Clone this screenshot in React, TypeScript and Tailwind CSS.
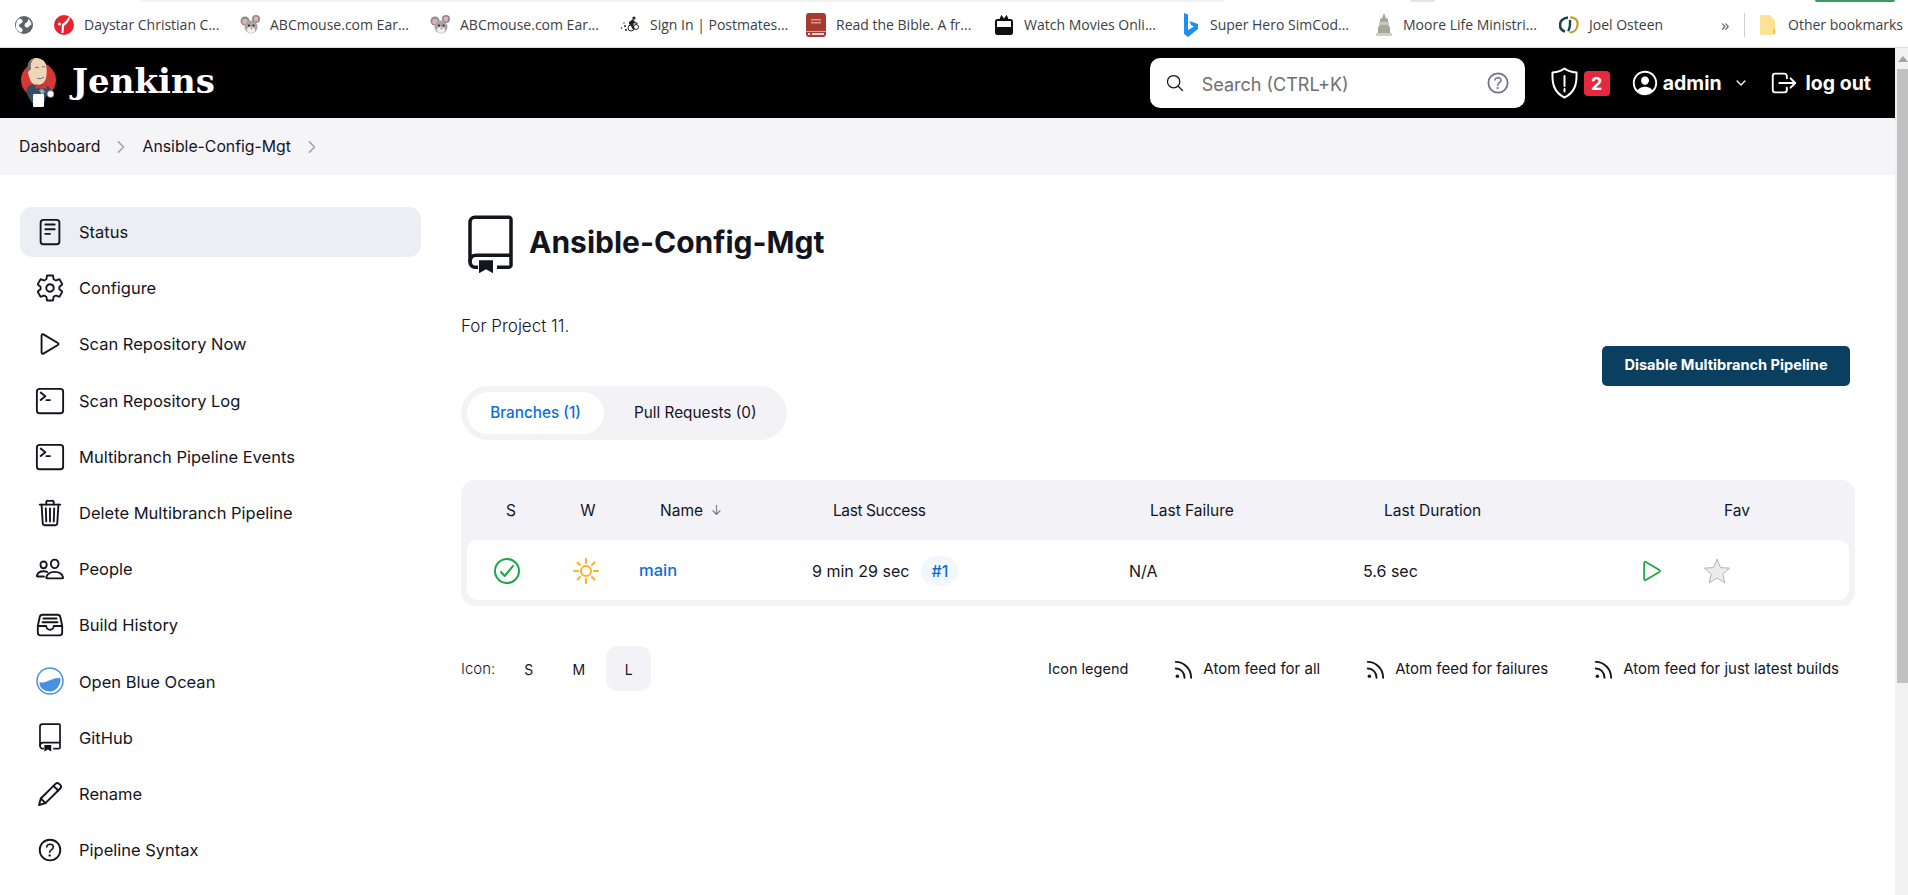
import type { ReactNode } from 'react';
import {
  IoReaderOutline,
  IoSettingsOutline,
  IoPlayOutline,
  IoTerminalOutline,
  IoTrashOutline,
  IoPeopleOutline,
  IoFileTrayFullOutline,
  IoHelpCircleOutline,
  IoSearchOutline,
  IoPersonCircleOutline,
  IoChevronDownOutline,
  IoLogOutOutline,
  IoChevronForwardOutline,
  IoCheckmarkCircleOutline,
} from 'react-icons/io5';

function GlobeIcon() {
  return (
    <svg width="18" height="18" viewBox="0 0 18 18">
      <circle cx="9" cy="9" r="9" fill="#5f6368" />
      <path d="M5 2.500c2 1 3 2 2.500 3.500S4 7.500 4 9.500s3 2 3.500 4-1 2.500-1.500 3c-4-1.500-5.500-4-5-8S3 3 5 2.500z" fill="#fff" />
      <path d="M10 7.500c2-.5 3.500-2.500 3-4.500 2 1 3.500 3.500 3.500 5.500-1.500.5-2 1.500-3 2.500s-2.500.5-3.500-.5 0-2.500 0-3z" fill="#fff" />
    </svg>
  );
}

function DaystarIcon() {
  return (
    <svg width="20" height="20" viewBox="0 0 20 20">
      <circle cx="10" cy="10" r="10" fill="#e8222e" />
      <path d="M8 9c2-1 5-4 7-7l1 1c-1 3-3 6-6 8l-.5 7H7.500z" fill="#fff" />
      <circle cx="5.500" cy="9" r="1.600" fill="#fff" />
      <path d="M11 4.500l2-1.500-1 3z" fill="#e8222e" />
    </svg>
  );
}

function MouseIcon() {
  return (
    <svg width="21" height="21" viewBox="0 0 21 21">
      <circle cx="5" cy="7" r="4.500" fill="#8f8b8d" />
      <circle cx="5" cy="7.500" r="2.800" fill="#e3b0b8" />
      <circle cx="16" cy="5" r="4" fill="#8f8b8d" />
      <circle cx="16" cy="5" r="2.400" fill="#e3b0b8" />
      <ellipse cx="11" cy="13" rx="6.500" ry="6.500" fill="#a9a5a6" />
      <ellipse cx="11" cy="16" rx="4" ry="3" fill="#f3efec" />
      <circle cx="9" cy="11.500" r="1" fill="#222" />
      <circle cx="13.500" cy="11.500" r="1" fill="#222" />
      <circle cx="11.500" cy="14.500" r="1" fill="#d9707c" />
    </svg>
  );
}

function PostmatesIcon() {
  return (
    <svg width="20" height="20" viewBox="0 0 20 20" fill="#222">
      <circle cx="14" cy="3" r="1.600" />
      <path d="M9 7l4-3 2 3 3 1-1 1-3-1-1 3 1 3h-1.500L11 11 9 9z" />
      <circle cx="11" cy="13" r="3" fill="none" stroke="#222" />
      <circle cx="16" cy="12" r="2.500" fill="none" stroke="#222" />
      <circle cx="1.500" cy="13" r="0.800" />
      <circle cx="5" cy="11" r="1" />
      <circle cx="6" cy="15" r="1" />
      <circle cx="4" cy="8" r="0.700" />
    </svg>
  );
}

function BibleIcon() {
  return (
    <svg width="20" height="24" viewBox="0 0 20 24">
      <rect x="0" y="0" width="20" height="24" rx="3" fill="#a83a32" />
      <rect x="5" y="6" width="10" height="1.500" fill="#d9958f" />
      <rect x="5" y="9" width="10" height="1.500" fill="#d9958f" />
      <rect x="0" y="18" width="20" height="1" fill="#d9a7a3" />
      <rect x="2" y="20" width="16" height="2" fill="#f4e3e1" />
      <rect x="4" y="20" width="2" height="2" fill="#d8333a" />
    </svg>
  );
}

function MovieIcon() {
  return (
    <svg width="18" height="20" viewBox="0 0 18 20">
      <rect x="1" y="5" width="16" height="14" rx="1.500" fill="#fff" stroke="#111" strokeWidth="2" />
      <rect x="1" y="12" width="16" height="7" fill="#111" />
      <path d="M5 5l1.500-3.500L9 5l2.500-3.500L13 5" fill="none" stroke="#111" strokeWidth="1.600" />
    </svg>
  );
}

function BingIcon() {
  return (
    <svg width="14" height="24" viewBox="0 0 14 24">
      <path d="M0 0l4 1.500v15.500l6-3.500-3-1.500-1.500-4L14 11v5L4 24l-4-3z" fill="#1d8ff0" />
    </svg>
  );
}

function MooreIcon() {
  return (
    <svg width="16" height="24" viewBox="0 0 16 24">
      <path d="M8 0l2 5 2 1v6l2 2v6H2v-6l2-2V6l2-1z" fill="#a5ab9a" />
      <rect x="3" y="9" width="10" height="3" fill="#c9cdb4" />
      <rect x="0" y="20" width="16" height="3" fill="#d0d0ca" />
    </svg>
  );
}

function JoelIcon() {
  return (
    <svg width="20" height="20" viewBox="0 0 20 20" fill="none">
      <path d="M11 2.500C17 2 19 6 18.500 10c-.5 5-4 7.500-8 7.500" stroke="#c89a35" strokeWidth="2.200" />
      <path d="M9 2.500C4 3 1 6 1 10c0 3 2 5.500 5 6.500" stroke="#17425f" strokeWidth="2.600" />
      <path d="M11 5c0 4 .5 8-2 11" stroke="#17425f" strokeWidth="2.400" />
    </svg>
  );
}

function FolderIcon() {
  return (
    <svg width="16" height="20" viewBox="0 0 16 20">
      <path d="M1.500 0H10l5 5.500V18a2 2 0 01-2 2H1.500A1.500 1.500 0 010 18.500v-17A1.500 1.500 0 011.500 0z" fill="#fde293" />
      <rect x="13" y="14" width="2.500" height="5" rx="1" fill="#f4c94e" />
    </svg>
  );
}

function JenkinsLogo() {
  return (
    <svg width="36" height="50" viewBox="0 0 36 50">
      <circle cx="18.500" cy="22" r="17.500" fill="#d33833" />
      <path d="M7 30c2-3 6-4 9-4l9 1c3 1 6 3 6 5l-1 5-4 1-2 8-12-1-3-5c-2-3-3-7-2-10z" fill="#335061" />
      <path d="M8 9C8 3 12 0 16 0s9 2 10 7c1 4 1 9 0 13s-4 7-8 7-7-2-8-6c-2-3-2-8-2-12z" fill="#f0d6b7" />
      <path d="M8 14C6 8 9 2 14 .5 11 3 10 7 11 11c-1 1-2 2-3 3z" fill="#6d6b6d" />
      <path d="M15 10c1.500-1 3-1 4 0M22 9c1-.5 2-.5 3 0M17 20c2 1 5 1 7-1" stroke="#49728b" strokeWidth="1" fill="none" />
      <path d="M16 26l5 2 5-2 1 5-4-1-2 1.500-2-1.500-4 1z" fill="#d33833" />
      <path d="M19 32l4-1 2 3-3 3z" fill="#81b0c4" />
      <rect x="13" y="36" width="11" height="13" rx="1" fill="#fff" />
      <circle cx="30.500" cy="36" r="3.500" fill="#f6f6f6" stroke="#49728b" strokeWidth="0.800" />
    </svg>
  );
}

function ShieldAlert() {
  return (
    <svg width="27" height="32" viewBox="0 0 27 32" fill="none" stroke="#fff" strokeWidth="2">
      <path d="M13.500 1.500c3 2.500 7 3.500 12 4 .5 11-1.500 20-12 25-10.500-5-12.500-14-12-25 5-.5 9-1.500 12-4z" strokeLinejoin="round" />
      <path d="M13.500 9v10M13.500 22v2.500" strokeLinecap="round" />
    </svg>
  );
}

function RepoIcon({ size }: { size: number }) {
  return (
    <svg width={size} height={size * 1.3} viewBox="0 0 45 58" fill="none">
      <path d="M10 52H6c-2.500-1-4-3-4-5V7c0-3 2-5 5-5h34c1 0 2 1 2 2v46c0 1-1 2-2 2H29" stroke="#14141f" strokeWidth="3.500" strokeLinejoin="round" />
      <path d="M2 47c0-5 2-7 6-7h35" stroke="#14141f" strokeWidth="3.500" />
      <path d="M11 45h14v13l-7-4-7 4z" fill="#14141f" />
    </svg>
  );
}

function PencilIcon() {
  return (
    <svg width="26" height="26" viewBox="0 0 26 26" fill="none" stroke="#14141f" strokeWidth="1.900" strokeLinejoin="round" strokeLinecap="round">
      <path d="M2 24l1.800-6.500L18.500 2.800c1-1 2.600-1 3.600 0l1.100 1.100c1 1 1 2.600 0 3.600L8.500 22.200z" />
      <path d="M3.800 17.500l4.700 4.700M16.500 4.800l4.700 4.700" />
    </svg>
  );
}

function BlueOceanIcon() {
  return (
    <svg width="28" height="28" viewBox="0 0 28 28">
      <circle cx="14" cy="14" r="13" fill="#fff" stroke="#4a90e2" strokeWidth="1.500" />
      <path d="M3.500 15c4 1.500 7-.5 11-2 4-1.500 7-2.500 10-1.500.5 6-4 13-10.500 13S3 20 3.500 15z" fill="#4a90e2" />
    </svg>
  );
}

function SunIcon() {
  return (
    <svg width="28" height="28" viewBox="0 0 28 28" fill="none" stroke="#fdb022" strokeWidth="2" strokeLinecap="round">
      <circle cx="14" cy="14" r="5" />
      <path d="M14 2v4M14 22v4M2 14h4M22 14h4M5.500 5.500l2.500 2.500M20 20l2.500 2.500M5.500 22.500L8 20M20 8l2.500-2.500" />
    </svg>
  );
}

function StarIcon() {
  return (
    <svg width="26" height="26" viewBox="0 0 26 26">
      <path d="M13 1l3.500 8.500 9 .7-6.800 5.800 2.100 8.800L13 20l-7.800 4.800 2.100-8.800L.5 10.200l9-.7z" fill="#ececec" stroke="#b5b5b5" strokeWidth="1" strokeLinejoin="round" />
    </svg>
  );
}

function RssIcon() {
  return (
    <svg width="20" height="22" viewBox="0 0 18 20" fill="none" stroke="#14141f" strokeWidth="1.700" strokeLinecap="round">
      <circle cx="3" cy="16.500" r="1.600" fill="#14141f" stroke="none" />
      <path d="M1.500 9.500c4.500 0 8 3.500 8 8.500" />
      <path d="M1.500 3.500C9 3.500 15.500 10 15.500 18" />
    </svg>
  );
}

const bookmarks: { label: string; icon: ReactNode; itemW: string; iconW: string }[] = [
  { label: 'Daystar Christian C...', icon: <DaystarIcon />, itemW: 'w-[186px]', iconW: 'w-[30px]' },
  { label: 'ABCmouse.com Ear...', icon: <MouseIcon />, itemW: 'w-[190px]', iconW: 'w-[30px]' },
  { label: 'ABCmouse.com Ear...', icon: <MouseIcon />, itemW: 'w-[190px]', iconW: 'w-[30px]' },
  { label: 'Sign In | Postmates...', icon: <PostmatesIcon />, itemW: 'w-[186px]', iconW: 'w-[30px]' },
  { label: 'Read the Bible. A fr...', icon: <BibleIcon />, itemW: 'w-[189px]', iconW: 'w-[30px]' },
  { label: 'Watch Movies Onli...', icon: <MovieIcon />, itemW: 'w-[189px]', iconW: 'w-[29px]' },
  { label: 'Super Hero SimCod...', icon: <BingIcon />, itemW: 'w-[192px]', iconW: 'w-[26px]' },
  { label: 'Moore Life Ministri...', icon: <MooreIcon />, itemW: 'w-[183px]', iconW: 'w-[27px]' },
  { label: 'Joel Osteen', icon: <JoelIcon />, itemW: 'w-[162px]', iconW: 'w-[30px]' },
];

const sideItems: { label: string; icon: ReactNode; active?: boolean }[] = [
  { label: 'Status', icon: <IoReaderOutline size={30} />, active: true },
  { label: 'Configure', icon: <IoSettingsOutline size={30} /> },
  { label: 'Scan Repository Now', icon: <IoPlayOutline size={30} /> },
  { label: 'Scan Repository Log', icon: <IoTerminalOutline size={30} /> },
  { label: 'Multibranch Pipeline Events', icon: <IoTerminalOutline size={30} /> },
  { label: 'Delete Multibranch Pipeline', icon: <IoTrashOutline size={30} /> },
  { label: 'People', icon: <IoPeopleOutline size={30} /> },
  { label: 'Build History', icon: <IoFileTrayFullOutline size={30} /> },
  { label: 'Open Blue Ocean', icon: <BlueOceanIcon /> },
  { label: 'GitHub', icon: <RepoIcon size={22} /> },
  { label: 'Rename', icon: <PencilIcon /> },
  { label: 'Pipeline Syntax', icon: <IoHelpCircleOutline size={32} /> },
];

const feeds = ['Atom feed for all', 'Atom feed for failures', 'Atom feed for just latest builds'];

export default function App() {
  return (
    <div className="h-[895px] w-[1908px] overflow-hidden bg-white font-['Inter',sans-serif] text-[#14141f]">
      {/* bookmarks bar */}
      <div className="h-[48px] border-b border-[#dadce0] bg-white">
        <div className="flex h-[2px]">
          <div className="ml-[140px] w-[1085px] rounded-b bg-[#f1f3f4]" />
          <div className="ml-[185px] w-[25px] rounded-b bg-[#e3e3e3]" />
          <div className="ml-[380px] w-[80px] rounded-b bg-[#3c9a5f]" />
        </div>
        <div className="flex h-[45px] items-center pl-[15px] font-['Open_Sans',sans-serif] text-[14px] text-[#3c4043]">
          <div className="mr-[21px] flex w-[18px] items-center"><GlobeIcon /></div>
          {bookmarks.map((b, i) => (
            <div key={i} className={`flex items-center ${b.itemW}`}>
              <span className={`flex shrink-0 items-center ${b.iconW}`}>{b.icon}</span>
              <span className="whitespace-nowrap">{b.label}</span>
            </div>
          ))}
          <span className="w-[23px] text-[17px] text-[#5f6368]">»</span>
          <div className="mr-[15px] h-[24px] w-px bg-[#d0d3d6]" />
          <span className="flex w-[28px] shrink-0 items-center"><FolderIcon /></span>
          <span className="whitespace-nowrap">Other bookmarks</span>
        </div>
      </div>

      <div className="flex h-[847px]">
        <div className="w-[1895px] shrink-0">
          {/* jenkins header */}
          <header className="flex h-[70px] items-center bg-black pr-[24px] pl-[20px] text-white">
            <JenkinsLogo />
            <span className="ml-[16px] pb-[4px] font-['DejaVu_Serif',serif] text-[34px] leading-none font-bold">Jenkins</span>
            <div className="ml-auto flex h-[50px] w-[375px] items-center rounded-[10px] bg-white pr-[13px] pl-[15px]">
              <IoSearchOutline size={20} className="text-[#14141f]" />
              <span className="ml-[17px] pt-[2px] text-[18px] text-[#6e6e73]">Search (CTRL+K)</span>
              <IoHelpCircleOutline size={28} className="ml-auto text-[#6f6f90]" />
            </div>
            <span className="ml-[26px] flex"><ShieldAlert /></span>
            <span className="ml-[6px] flex h-[25px] w-[26px] items-center justify-center rounded-[4px] bg-[#e6293f] text-[18px] font-bold">2</span>
            <IoPersonCircleOutline size={30} className="ml-[20px]" />
            <span className="ml-[3px] pt-[2px] text-[19.500px] font-bold">admin</span>
            <IoChevronDownOutline size={14} className="ml-[12px]" />
            <IoLogOutOutline size={30} className="ml-[21px]" />
            <span className="ml-[7px] pt-[2px] text-[19.500px] font-bold">log out</span>
          </header>

          {/* breadcrumb */}
          <nav className="flex h-[57px] items-center bg-[#f5f5f8] pt-[1px] pl-[19px] text-[15.800px] text-[#14141f]">
            <span>Dashboard</span>
            <IoChevronForwardOutline size={18} className="mx-[12px] text-[#a3a3bd]" />
            <span>Ansible-Config-Mgt</span>
            <IoChevronForwardOutline size={18} className="ml-[12px] text-[#a3a3bd]" />
          </nav>

          <div className="flex">
            {/* sidebar */}
            <aside className="flex w-[421px] shrink-0 flex-col gap-[6.180px] pt-[32px] pl-[20px]">
              {sideItems.map(item => (
                <div
                  key={item.label}
                  className={`flex h-[50px] items-center rounded-[12px] pl-[15px] text-[16.500px] ${item.active ? 'bg-[#edeef3]' : ''}`}
                >
                  <span className="flex w-[30px] shrink-0 items-center justify-center">{item.icon}</span>
                  <span className="mt-px ml-[14px]">{item.label}</span>
                </div>
              ))}
            </aside>

            {/* main content */}
            <main className="min-w-0 flex-1 pr-[40px] pl-[40px]">
              <div className="mt-[40px] flex h-[58px] items-center pl-[7px]">
                <RepoIcon size={45} />
                <h1 className="ml-[16px] pb-[4px] text-[30px] font-bold">Ansible-Config-Mgt</h1>
              </div>
              <p className="mt-[41px] h-[24px] text-[17px] leading-[24px] font-light">For Project 11.</p>

              <div className="mt-[8px] flex justify-end pr-[5px]">
                <button className="flex h-[40px] w-[248px] items-center justify-center rounded-[5px] bg-[#0a3f5f] text-[14.600px] font-bold text-white">
                  Disable Multibranch Pipeline
                </button>
              </div>

              <div className="flex h-[54px] w-[326px] items-center rounded-[27px] bg-[#f2f2f7] p-[6px] text-[15.300px]">
                <div className="flex h-[42px] w-[137px] items-center justify-center rounded-[21px] bg-white pt-px font-medium text-[#0b6ed8]">Branches (1)</div>
                <div className="ml-[30px] pt-px">Pull Requests (0)</div>
              </div>

              {/* projects table */}
              <div className="mt-[40px] rounded-[14px] bg-[#f2f2f7] px-[6px] pb-[6px]">
                <div className="flex h-[60px] items-center pt-px text-[15.500px]">
                  <div className="w-[88px] text-center">S</div>
                  <div className="w-[66px] text-center">W</div>
                  <div className="flex w-[179px] items-center pl-[39px]">Name<span className="ml-[8px] text-[13px] font-light text-[#55555f]">↓</span></div>
                  <div className="w-[315px] pl-[33px] tracking-[-0.400px]">Last Success</div>
                  <div className="w-[235px] pl-[35px]">Last Failure</div>
                  <div className="w-[280px] pl-[34px]">Last Duration</div>
                  <div className="pl-[94px]">Fav</div>
                </div>
                <div className="flex h-[60px] items-center rounded-[10px] bg-white pt-px text-[16px]">
                  <div className="flex w-[80px] justify-center"><IoCheckmarkCircleOutline size={32} className="text-[#1ea64b]" /></div>
                  <div className="flex w-[78px] justify-center"><SunIcon /></div>
                  <div className="w-[175px] pl-[14px] text-[16.500px] font-medium text-[#0b6ed8]">main</div>
                  <div className="flex w-[315px] items-center pl-[12px]">
                    <span>9 min 29 sec</span>
                    <span className="ml-[12px] flex h-[30px] w-[37px] items-center justify-center rounded-[15px] bg-[#f1f7fe] font-medium text-[#0b6ed8]">#1</span>
                  </div>
                  <div className="w-[235px] pl-[14px]">N/A</div>
                  <div className="w-[280px] pl-[13px]">5.6 sec</div>
                  <div className="flex items-center pl-[8px]">
                    <IoPlayOutline size={28} className="text-[#1ea64b]" />
                    <span className="ml-[38px] flex"><StarIcon /></span>
                  </div>
                </div>
              </div>

              {/* icon size + feeds */}
              <div className="mt-[40px] flex h-[45px] items-center text-[15px]">
                <span className="pt-px font-light">Icon:</span>
                <span className="ml-[11px] flex w-[45px] justify-center pt-px text-[14px]">S</span>
                <span className="ml-[5px] flex w-[45px] justify-center pt-px text-[14px]">M</span>
                <span className="ml-[5px] flex h-[45px] w-[45px] items-center justify-center rounded-[12px] bg-[#f2f2f7] pt-px text-[14px]">L</span>
                <span className="ml-auto pt-px text-[14.500px]">Icon legend</span>
                {feeds.map(label => (
                  <span key={label} className="ml-[46px] flex items-center pt-px">
                    <RssIcon />
                    <span className="ml-[9px]">{label}</span>
                  </span>
                ))}
                <span className="w-[16px]" />
              </div>
            </main>
          </div>
        </div>

        {/* scrollbar */}
        <div className="flex flex-1 flex-col bg-[#f1f1f1] pl-[2px]">
          <div className="flex h-[21px] items-center justify-center">
            <div className="size-0 border-x-[5px] border-b-[6px] border-x-transparent border-b-[#a3a3a3]" />
          </div>
          <div className="h-[614px] bg-[#c1c1c1]" />
        </div>
      </div>
    </div>
  );
}
